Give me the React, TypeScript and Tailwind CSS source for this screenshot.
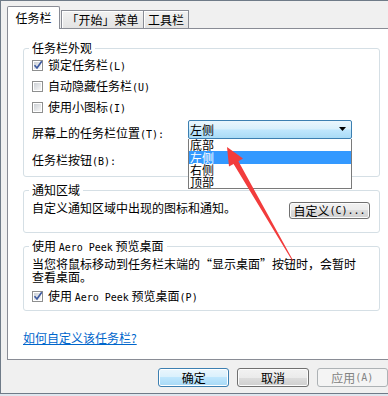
import React from "react";

const M = ({ children }: { children: React.ReactNode }) => (
  <span className="font-['DejaVu_Sans_Mono',monospace] text-[10px]">{children}</span>
);

function Check({ checked }: { checked?: boolean }) {
  return (
    <span className="w-[11px] h-[11px] shrink-0 border border-[#8e8f8f] bg-white p-[1px] flex">
      <span className="relative flex-1 bg-linear-to-br from-[#cdd1d6] to-[#f7f7f7]">
        {checked && (
          <svg className="absolute -left-[1px] -top-[2px]" width="10" height="10" viewBox="0 0 10 10">
            <path d="M1.5 5.2 L4 8 L8.8 1.2" fill="none" stroke="#3d5aa0" strokeWidth="1.7" />
          </svg>
        )}
      </span>
    </span>
  );
}

function Group({ title, className, children }: { title: React.ReactNode; className: string; children: React.ReactNode }) {
  return (
    <div className={"relative w-[357px] border border-[#d5dfe5] rounded-[3px] " + className}>
      <span className="absolute left-[5px] -top-[8px] bg-white px-[3px] whitespace-nowrap">{title}</span>
      {children}
    </div>
  );
}

function Btn({ children, kind }: { children: React.ReactNode; kind?: "default" | "disabled" | "normal" }) {
  if (kind === "default")
    return (
      <div className="w-[73px] h-[19px] flex items-center justify-center rounded-[3px] border border-[#3c7fb1] bg-[linear-gradient(#eaf6fd,#d9f0fc_50%,#bee6fd_50%,#a7d9f5)] shadow-[inset_0_0_0_1px_#ffffff]">
        {children}
      </div>
    );
  if (kind === "disabled")
    return (
      <div className="w-[73px] h-[19px] flex items-center justify-center rounded-[3px] border border-[#adb2b5] bg-[#f4f4f4] text-[#838383]">
        {children}
      </div>
    );
  return (
    <div className="w-[73px] h-[19px] flex items-center justify-center rounded-[3px] border border-[#707070] bg-[linear-gradient(#f2f2f2,#ebebeb_50%,#dddddd_50%,#cfcfcf)] shadow-[inset_0_0_0_1px_#fcfcfc]">
      {children}
    </div>
  );
}

export default function App() {
  return (
    <div className="relative w-[388px] h-[396px] overflow-hidden bg-[#dfe6ee] font-['Noto_Sans_CJK_SC',sans-serif] text-[12px] leading-[13px] text-black">
      <div className="h-[394px] bg-[#f0f0f0] border-l border-t border-b border-[#6f7b88] flex flex-col">
        {/* Tabs */}
        <div className="flex items-start pl-[6px] pt-[5px]">
          <div className="relative z-10 w-[53px] h-[23px] -mb-[1px] bg-white border border-b-0 border-[#898c95] rounded-t-[2px] flex items-center justify-center pb-[1px]">
            任务栏
          </div>
          <div className="mt-[4px] ml-[1px] w-[83px] h-[18px] border border-b-0 border-[#898c95] bg-linear-to-b from-[#f2f2f2] to-[#e3e3e3] shadow-[inset_1px_1px_0_#ffffff] flex items-center justify-center whitespace-nowrap">
            「开始」菜单
          </div>
          <div className="mt-[4px] w-[45px] h-[18px] border border-l-0 border-b-0 border-[#898c95] bg-linear-to-b from-[#f2f2f2] to-[#e3e3e3] shadow-[inset_1px_1px_0_#ffffff] flex items-center justify-center whitespace-nowrap">
            工具栏
          </div>
        </div>

        {/* Panel */}
        <div className="ml-[6px] w-[400px] h-[332px] shrink-0 border border-[#898c95] bg-white pl-[15px] pt-[19px] flex flex-col">
          <Group title="任务栏外观" className="h-[129px] shrink-0">
            <div className="flex flex-col pl-[8px] pt-[10px]">
              <div className="flex items-center h-[13px] gap-[5px]">
                <Check checked />
                <span>锁定任务栏<M>(L)</M></span>
              </div>
              <div className="flex items-center h-[13px] gap-[5px] mt-[8px]">
                <Check />
                <span>自动隐藏任务栏<M>(U)</M></span>
              </div>
              <div className="flex items-center h-[13px] gap-[5px] mt-[8px]">
                <Check />
                <span>使用小图标<M>(I)</M></span>
              </div>
              <div className="flex items-start mt-[6px]">
                <span className="w-[156px] mt-[6px] whitespace-nowrap">屏幕上的任务栏位置<M>(T):</M></span>
                <div className="relative w-[164px] h-[19px]">
                  <div className="h-full border border-[#3c7fb1] rounded-[2px] bg-[linear-gradient(#eaf6fd,#d9f0fc_45%,#bee6fd_55%,#a9dbf6)] flex items-center justify-between pl-[1px] pr-[4px]">
                    <span>左侧</span>
                    <svg width="8" height="5" viewBox="0 0 8 5">
                      <path d="M0 0 H7 L3.5 4 Z" fill="#000" />
                    </svg>
                  </div>
                  <div className="absolute left-0 top-[19px] z-10 w-[164px] border border-t-0 border-[#7a7a7a] bg-white flex flex-col">
                    <div className="h-[12px] leading-[12px] pl-[1px]">底部</div>
                    <div className="h-[13px] leading-[13px] pl-[1px] bg-[#3399ff] text-white">左侧</div>
                    <div className="h-[12px] leading-[12px] pl-[1px]">右侧</div>
                    <div className="h-[12px] leading-[12px] pl-[1px]">顶部</div>
                  </div>
                </div>
              </div>
              <span className="mt-[12px] whitespace-nowrap">任务栏按钮<M>(B):</M></span>
            </div>
          </Group>

          <Group title="通知区域" className="h-[43px] mt-[13px] shrink-0">
            <div className="flex items-start justify-between pl-[8px] pr-[9px] pt-[10px]">
              <span className="whitespace-nowrap">自定义通知区域中出现的图标和通知。</span>
              <div className="mt-[1px] w-[81px] h-[17px] flex items-center justify-center rounded-[3px] border border-[#707070] bg-[linear-gradient(#f2f2f2,#ebebeb_50%,#dddddd_50%,#cfcfcf)] shadow-[inset_0_0_0_1px_#fcfcfc] whitespace-nowrap">
                自定义<M>(C)...</M>
              </div>
            </div>
          </Group>

          <Group
            title={
              <>
                使用 <M>Aero Peek</M> 预览桌面
              </>
            }
            className="h-[65px] mt-[13px] shrink-0"
          >
            <div className="flex flex-col pl-[8px] pt-[10px]">
              <span className="whitespace-nowrap">
                当您将鼠标移动到任务栏末端的<span className="inline-block w-[12px] text-right">“</span>显示桌面<span className="inline-block w-[12px] text-left">”</span>按钮时，会暂时
              </span>
              <span className="whitespace-nowrap">查看桌面。</span>
              <div className="flex items-center h-[13px] gap-[5px] mt-[7px]">
                <Check checked />
                <span className="whitespace-nowrap">
                  使用 <M>Aero Peek</M> 预览桌面<M>(P)</M>
                </span>
              </div>
            </div>
          </Group>

          <span className="mt-[20px] text-[#0066cc] underline whitespace-nowrap">如何自定义该任务栏?</span>
        </div>

        {/* Buttons */}
        <div className="flex gap-[8px] pl-[157px] mt-[8px]">
          <Btn kind="default">确定</Btn>
          <Btn>取消</Btn>
          <Btn kind="disabled">
            应用<M>(A)</M>
          </Btn>
        </div>
      </div>

      {/* Red annotation arrow */}
      <svg className="absolute left-0 top-0 z-20 pointer-events-none" width="388" height="396" viewBox="0 0 388 396">
        <polygon
          points="227,147 243,158.6 238.4,161.2 293.4,261 292.4,261 233.6,164 229,166.6"
          fill="#f23c3c"
        />
      </svg>
    </div>
  );
}
